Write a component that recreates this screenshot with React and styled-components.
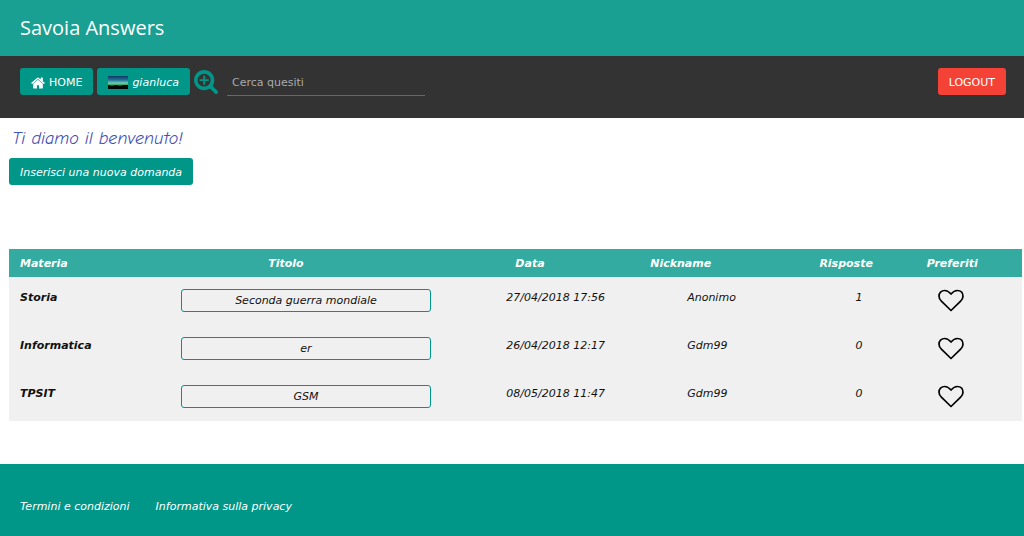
import React, { useState } from "react";
import styled, { createGlobalStyle, css } from "styled-components";

const columns = [
  { label: "Materia", width: "17%", headIndent: 11 },
  { label: "Titolo", width: "32%", headIndent: 87 },
  { label: "Data", width: "14%", headIndent: 10 },
  { label: "Nickname", width: "17%", headIndent: 3 },
  { label: "Risposte", width: "10%", headIndent: 0 },
  { label: "Preferiti", width: "10%", headIndent: 6 },
];

const questions = [
  {
    subject: "Storia",
    title: "Seconda guerra mondiale",
    date: "27/04/2018 17:56",
    nickname: "Anonimo",
    answers: 1,
  },
  {
    subject: "Informatica",
    title: "er",
    date: "26/04/2018 12:17",
    nickname: "Gdm99",
    answers: 0,
  },
  {
    subject: "TPSIT",
    title: "GSM",
    date: "08/05/2018 11:47",
    nickname: "Gdm99",
    answers: 0,
  },
];

const HomeIcon = () => (
  <svg width="14" height="12" viewBox="64 192 1664 1408" aria-hidden="true">
    <path
      fill="currentColor"
      d="M1472 992v480q0 26-19 45t-45 19h-384v-384h-256v384h-384q-26 0-45-19t-19-45v-480q0-1 .5-3t.5-3l575-474 575 474q1 2 1 6zm223-69l-62 74q-8 9-21 11h-3q-13 0-21-7l-692-577-692 577q-12 8-24 7-13-2-21-11l-62-74q-8-10-7-23.5t11-21.5l719-599q32-26 76-26t76 26l244 204v-195q0-14 9-23t23-9h192q14 0 23 9t9 23v408l219 182q10 8 11 21.5t-7 23.5z"
    />
  </svg>
);

const SearchPlusIcon = () => (
  <svg width="24" height="24" viewBox="64 128 1664 1664" aria-hidden="true">
    <path
      fill="currentColor"
      d="M1088 800v64q0 13-9.500 22.500t-22.500 9.500h-224v224q0 13-9.500 22.500t-22.500 9.500h-64q-13 0-22.500-9.500t-9.500-22.500v-224h-224q-13 0-22.500-9.500t-9.500-22.500v-64q0-13 9.500-22.500t22.500-9.500h224v-224q0-13 9.500-22.500t22.500-9.500h64q13 0 22.500 9.500t9.500 22.500v224h224q13 0 22.500 9.500t9.500 22.500zm128 32q0-185-131.500-316.500t-316.500-131.500-316.500 131.500-131.500 316.500 131.500 316.500 316.500 131.500 316.500-131.500 131.500-316.500zm512 832q0 53-37.500 90.500t-90.500 37.500q-54 0-90-38l-343-342q-179 124-399 124-143 0-273.500-55.500t-225-150-150-225-55.500-273.500 55.500-273.500 150-225 225-150 273.500-55.500 273.500 55.500 225 150 150 225 55.500 273.500q0 220-124 399l343 343q37 37 37 90z"
    />
  </svg>
);

const HeartIcon = ({ filled }) => (
  <svg width="26" height="23" viewBox="0 0 26 23" aria-hidden="true">
    <path
      d="M13 21.500L3.600 12.400C1.900 10.700 1 9 1 7.200C1 3.700 3.200 1.500 6.800 1.500C9.300 1.500 11.200 3 13 5C14.800 3 16.700 1.500 19.200 1.500C22.800 1.500 25 3.700 25 7.200C25 9 24.100 10.700 22.400 12.400Z"
      fill={filled ? "currentColor" : "none"}
      stroke="currentColor"
      strokeWidth="1.700"
      strokeLinejoin="round"
    />
  </svg>
);

const Avatar = () => (
  <svg width="20" height="13" viewBox="0 0 20 13" aria-hidden="true">
    <defs>
      <linearGradient id="aurora" x1="0" y1="0" x2="0" y2="1">
        <stop offset="0" stopColor="#123a63" />
        <stop offset="0.3" stopColor="#1f6f96" />
        <stop offset="0.55" stopColor="#6fd0b4" />
        <stop offset="0.7" stopColor="#2f9a4a" />
        <stop offset="0.8" stopColor="#04140a" />
      </linearGradient>
    </defs>
    <rect width="20" height="13" fill="url(#aurora)" />
    <path d="M0 9L4 10L8 9L12 10L16 9L20 9V13H0Z" fill="#020805" />
  </svg>
);

const App = () => {
  const [search, setSearch] = useState("");
  const [favourites, setFavourites] = useState([]);

  const toggleFavourite = (title) => {
    setFavourites((prev) =>
      prev.includes(title) ? prev.filter((t) => t !== title) : [...prev, title]
    );
  };

  return (
    <Page>
      <GlobalStyle />
      <Header>
        <h1>Savoia Answers</h1>
      </Header>

      <Nav>
        <ButtonLink href="#home">
          <HomeIcon />
          HOME
        </ButtonLink>
        <ButtonLink href="#profilo" $italic>
          <Avatar />
          gianluca
        </ButtonLink>
        <SearchForm onSubmit={(e) => e.preventDefault()}>
          <IconButton type="submit" aria-label="Cerca">
            <SearchPlusIcon />
          </IconButton>
          <SearchInput
            type="text"
            aria-label="Cerca quesiti"
            placeholder="Cerca quesiti"
            value={search}
            onChange={(e) => setSearch(e.target.value)}
          />
        </SearchForm>
        <Button type="button" $danger>
          LOGOUT
        </Button>
      </Nav>

      <Main>
        <Welcome>Ti diamo il benvenuto!</Welcome>
        <Button type="button" $italic>
          Inserisci una nuova domanda
        </Button>

        <Table>
          <thead>
            <tr>
              {columns.map(({ label, width, headIndent }) => (
                <HeadCell key={label} scope="col" $width={width} $indent={headIndent}>
                  {label}
                </HeadCell>
              ))}
            </tr>
          </thead>
          <tbody>
            {questions.map((q) => (
              <tr key={q.title}>
                <Cell $indent={11} $bold>
                  {q.subject}
                </Cell>
                <Cell>
                  <TitleButton type="button">{q.title}</TitleButton>
                </Cell>
                <Cell $indent={1}>{q.date}</Cell>
                <Cell $indent={40}>{q.nickname}</Cell>
                <Cell $indent={36}>{q.answers}</Cell>
                <Cell $indent={17}>
                  <IconButton
                    type="button"
                    aria-label={`Preferito: ${q.title}`}
                    aria-pressed={favourites.includes(q.title)}
                    onClick={() => toggleFavourite(q.title)}
                    $dark
                  >
                    <HeartIcon filled={favourites.includes(q.title)} />
                  </IconButton>
                </Cell>
              </tr>
            ))}
          </tbody>
        </Table>
      </Main>

      <Footer>
        <a href="#termini">Termini e condizioni</a>
        <a href="#privacy">Informativa sulla privacy</a>
      </Footer>
    </Page>
  );
};

export default App;

const GlobalStyle = createGlobalStyle`
  * {
    box-sizing: border-box;
  }

  body {
    margin: 0;
    background-color: #fff;
    color: #111;
    font-family: Verdana, "DejaVu Sans", sans-serif;
    font-size: 11px;
    line-height: 18px;
  }

  button,
  input {
    font: inherit;
  }
`;

const Page = styled.div`
  display: flex;
  flex-direction: column;
  min-height: 100vh;
`;

const Header = styled.header`
  padding: 12px 20px;
  background-color: #1aa093;
  color: #fff;

  h1 {
    margin: 0;
    font-family: "Segoe UI", "Open Sans", sans-serif;
    font-size: 20px;
    font-weight: 400;
    line-height: 32px;
  }
`;

const Nav = styled.nav`
  display: flex;
  align-items: flex-start;
  gap: 4px;
  padding: 12px 18px 22px 20px;
  background-color: #333;
`;

const buttonStyles = css`
  display: inline-flex;
  align-items: center;
  gap: 4px;
  height: 27px;
  padding: 2px 11px 0;
  border: none;
  border-radius: 3px;
  background-color: ${(props) => (props.$danger ? "#f44336" : "#009688")};
  color: #fff;
  font-style: ${(props) => (props.$italic ? "italic" : "normal")};
  text-decoration: none;
  white-space: nowrap;
  cursor: pointer;
`;

const Button = styled.button`
  ${buttonStyles}
`;

const ButtonLink = styled.a`
  ${buttonStyles}
`;

const SearchForm = styled.form`
  display: flex;
  flex: 1;
  gap: 9px;
`;

const IconButton = styled.button`
  display: block;
  padding: 0;
  border: none;
  background: none;
  color: ${(props) => (props.$dark ? "#000" : "#009688")};
  line-height: 0;
  cursor: pointer;
`;

const SearchInput = styled.input`
  width: 198px;
  height: 28px;
  padding: 2px 5px 0;
  border: none;
  border-bottom: 1px solid #009688;
  outline: none;
  background: none;
  color: #fff;

  &::placeholder {
    color: #aaa;
    opacity: 1;
  }
`;

const Main = styled.main`
  padding: 9px 2px 43px 9px;
`;

const Welcome = styled.h2`
  margin: 0 0 7px;
  padding-left: 3px;
  color: #3f51b5;
  font-family: "Comic Sans MS", "Comic Neue", Lato, cursive;
  font-size: 18px;
  font-style: italic;
  font-weight: 400;
  line-height: 24px;
`;

const Table = styled.table`
  width: 100%;
  margin-top: 64px;
  border-collapse: collapse;
  table-layout: fixed;
  background-color: #f0f0f0;
  font-style: italic;
`;

const HeadCell = styled.th`
  width: ${(props) => props.$width};
  height: 28px;
  padding: 2px 0 0 ${(props) => props.$indent}px;
  background-color: #33aba0;
  color: #fff;
  text-align: left;
`;

const Cell = styled.td`
  height: 48px;
  padding: 12px 0 0 ${(props) => props.$indent || 0}px;
  font-weight: ${(props) => (props.$bold ? 700 : 400)};
  vertical-align: top;
`;

const TitleButton = styled.button`
  display: block;
  width: 77%;
  height: 23px;
  padding: 0 8px;
  border: 1px solid #009688;
  border-radius: 3px;
  background: none;
  color: #111;
  font-style: italic;
  cursor: pointer;
`;

const Footer = styled.footer`
  display: flex;
  flex: 1;
  gap: 26px;
  padding: 34px 20px 20px;
  background-color: #009688;

  a {
    color: #fff;
    font-style: italic;
    text-decoration: none;
  }
`;
